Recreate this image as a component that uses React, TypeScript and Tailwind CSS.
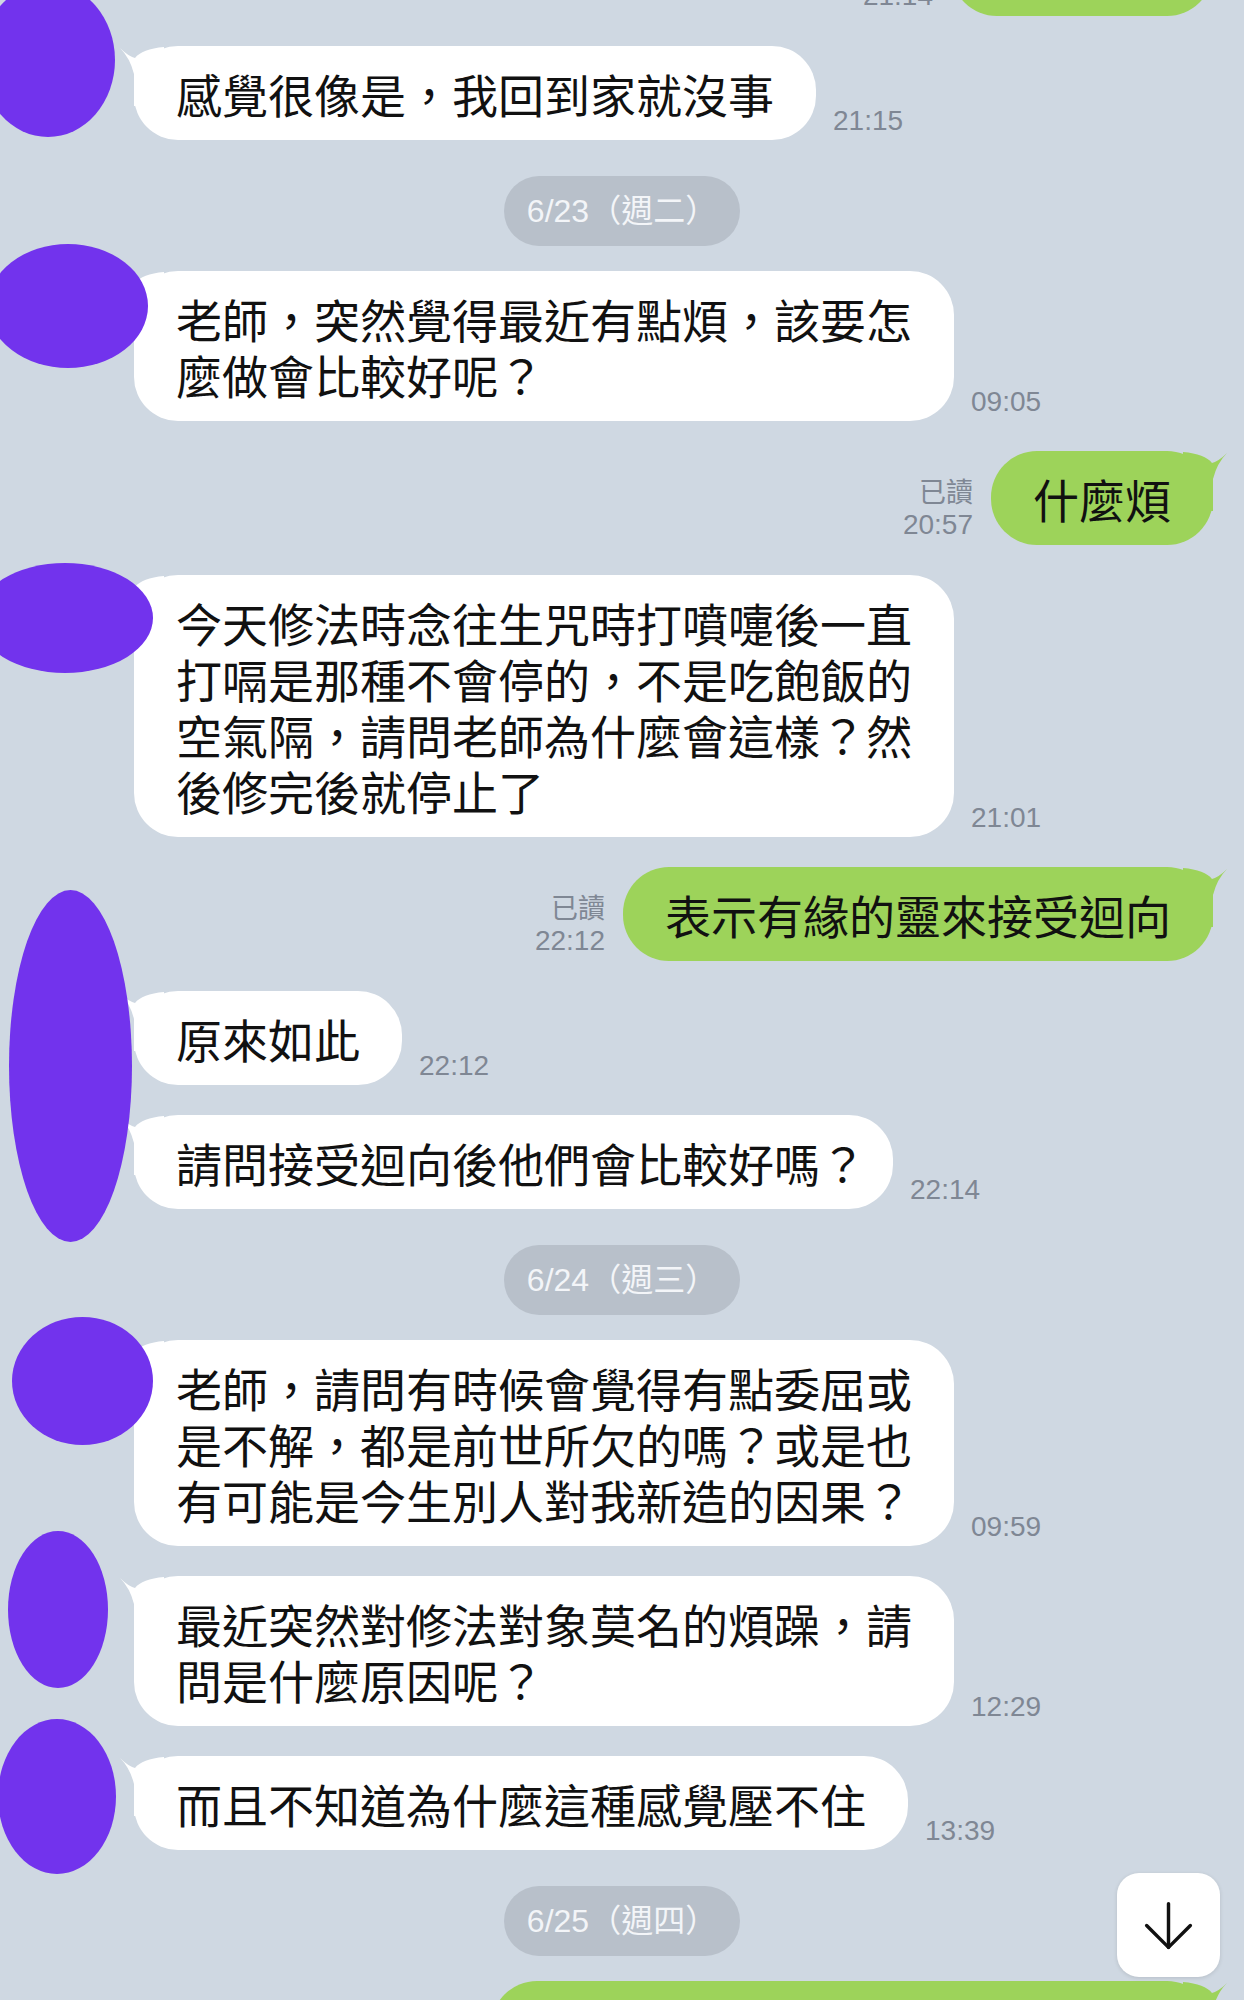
import React from 'react';
import { ArrowDown } from 'lucide-react';

type Item =
  | { kind: 'in'; lines: string[]; time: string }
  | { kind: 'out'; text?: string; width?: string; time?: string }
  | { kind: 'date'; label: string };

const items: Item[] = [
  { kind: 'out', width: 'w-[262px]', time: '21:14' },
  { kind: 'in', lines: ['感覺很像是，我回到家就沒事'], time: '21:15' },
  { kind: 'date', label: '6/23（週二）' },
  { kind: 'in', lines: ['老師，突然覺得最近有點煩，該要怎', '麼做會比較好呢？'], time: '09:05' },
  { kind: 'out', text: '什麼煩', time: '20:57' },
  {
    kind: 'in',
    lines: [
      '今天修法時念往生咒時打噴嚏後一直',
      '打嗝是那種不會停的，不是吃飽飯的',
      '空氣隔，請問老師為什麼會這樣？然',
      '後修完後就停止了',
    ],
    time: '21:01',
  },
  { kind: 'out', text: '表示有緣的靈來接受迴向', time: '22:12' },
  { kind: 'in', lines: ['原來如此'], time: '22:12' },
  { kind: 'in', lines: ['請問接受迴向後他們會比較好嗎？'], time: '22:14' },
  { kind: 'date', label: '6/24（週三）' },
  {
    kind: 'in',
    lines: [
      '老師，請問有時候會覺得有點委屈或',
      '是不解，都是前世所欠的嗎？或是也',
      '有可能是今生別人對我新造的因果？',
    ],
    time: '09:59',
  },
  { kind: 'in', lines: ['最近突然對修法對象莫名的煩躁，請', '問是什麼原因呢？'], time: '12:29' },
  { kind: 'in', lines: ['而且不知道為什麼這種感覺壓不住'], time: '13:39' },
  { kind: 'date', label: '6/25（週四）' },
  { kind: 'out', width: 'w-[722px]' },
];

// 頭像の代わりの紫の楕円
const blobs = [
  'left-[-19px] top-[-17px] w-[134px] h-[154px]',
  'left-[-12px] top-[244px] w-[160px] h-[124px]',
  'left-[-23px] top-[563px] w-[176px] h-[110px]',
  'left-[9px] top-[890px] w-[123px] h-[352px]',
  'left-[12px] top-[1317px] w-[141px] h-[128px]',
  'left-[8px] top-[1531px] w-[100px] h-[157px]',
  'left-[-2px] top-[1719px] w-[118px] h-[155px]',
];

function Tail({ side, color }: { side: 'left' | 'right'; color: string }) {
  const d = 'M2 2 Q 10 10 17 12 Q 24 3 46 1 L 46 60 L 16 60 L 16 28 Q 12 12 2 2 Z';
  return (
    <svg
      width="46"
      height="60"
      viewBox="0 0 46 60"
      className={`absolute top-0 ${side === 'left' ? 'left-[-16px]' : 'right-[-16px]'}`}
    >
      {side === 'left' ? (
        <path d={d} fill={color} />
      ) : (
        <g transform="translate(46,0) scale(-1,1)">
          <path d={d} fill={color} />
        </g>
      )}
    </svg>
  );
}

// 行末の全角「？」は半分ほど詰める
function renderLines(lines: string[]) {
  return lines.map((l, j) => (
    <React.Fragment key={j}>
      {j > 0 && <br />}
      {l.endsWith('？') ? (
        <>
          {l.slice(0, -1)}
          <span className="mr-[-15px]">？</span>
        </>
      ) : (
        l
      )}
    </React.Fragment>
  ));
}

function Time({ children }: { children: React.ReactNode }) {
  return (
    <span className="whitespace-nowrap text-[28px] leading-[34px] text-[#7f8794] font-['Liberation_Sans',sans-serif]">
      {children}
    </span>
  );
}

export default function App() {
  return (
    <div className="relative w-[1244px] h-[2000px] overflow-hidden bg-[#cfd8e2] font-['Liberation_Sans','Noto_Sans_CJK_TC',sans-serif]">
      <div className="flex flex-col mt-[-78px]">
        {items.map((item, i) => {
          const prev = items[i - 1];
          const mt =
            i === 0 ? '' : prev.kind === 'date' ? 'mt-[25px]' : item.kind === 'date' ? 'mt-[36px]' : 'mt-[30px]';

          if (item.kind === 'date') {
            return (
              <div
                key={i}
                className={`${mt} mx-auto flex h-[70px] w-[236px] items-center justify-center rounded-full bg-[#b8c0ca] text-[32px] text-[#f3f5f8]`}
              >
                {item.label}
              </div>
            );
          }

          if (item.kind === 'in') {
            return (
              <div key={i} className={`${mt} flex items-end pl-[134px]`}>
                <div className="relative rounded-[44px] bg-white px-[42px] py-[19px] text-[46px] leading-[56px] text-[#111111] font-['Noto_Sans_CJK_TC',sans-serif]">
                  <Tail side="left" color="#ffffff" />
                  <p className="relative whitespace-nowrap">{renderLines(item.lines)}</p>
                </div>
                <div className="mb-[2px] ml-[17px]">
                  <Time>{item.time}</Time>
                </div>
              </div>
            );
          }

          return (
            <div key={i} className={`${mt} flex items-end justify-end pr-[31px]`}>
              {item.time && (
                <div className="mb-[3px] mr-[18px] flex flex-col items-end">
                  <span className="text-[27px] leading-[34px] text-[#7f8794] font-['Noto_Sans_CJK_TC',sans-serif]">已讀</span>
                  <Time>{item.time}</Time>
                </div>
              )}
              <div
                className={`relative min-h-[94px] rounded-[46px] bg-[#9dd35a] px-[42px] py-[19px] text-[46px] leading-[56px] text-[#111111] font-['Noto_Sans_CJK_TC',sans-serif] ${item.width ?? ''}`}
              >
                <Tail side="right" color="#9dd35a" />
                {item.text && <p className="relative whitespace-nowrap">{item.text}</p>}
              </div>
            </div>
          );
        })}
      </div>

      {blobs.map((b, i) => (
        <div key={i} className={`absolute rounded-[50%] bg-[#7233ed] ${b}`} />
      ))}

      <div className="absolute left-[1117px] top-[1873px] flex h-[104px] w-[103px] items-center justify-center rounded-[22px] bg-white shadow-[0_1px_4px_rgba(0,0,0,0.12)]">
        <ArrowDown size={75} strokeWidth={1.1} color="#111111" />
      </div>
    </div>
  );
}
